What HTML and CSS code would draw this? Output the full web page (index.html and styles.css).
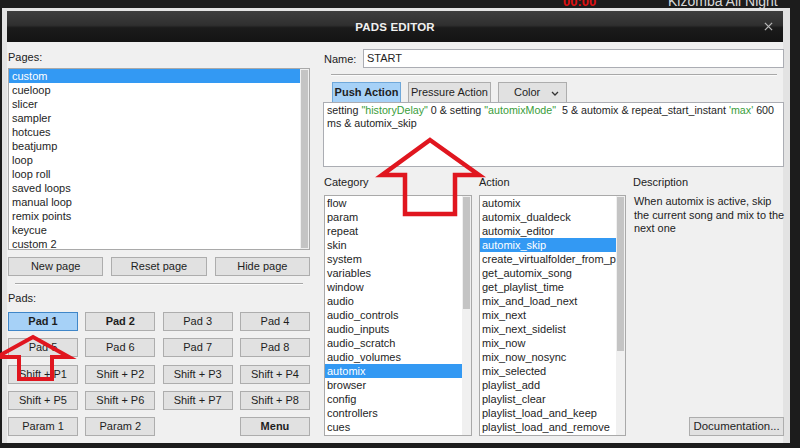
FILE: index.html
```html
<!DOCTYPE html>
<html>
<head>
<meta charset="utf-8">
<title>Pads Editor</title>
<link rel="stylesheet" href="styles.css">
</head>
<body>
<div class="screen">
  <div class="bg-app">
    <span class="bg-red">00:00</span>
    <span class="bg-song">Kizomba All Night /Dem</span>
  </div>
  <div class="window">
    <div class="titlebar">
      <span class="title">PADS EDITOR</span>
      <svg class="close" viewBox="0 0 10 10"><path d="M1 1L9 9M9 1L1 9" stroke="#b8b8b8" stroke-width="1.4"/></svg>
    </div>
    <div class="content">
      <div class="left">
        <div class="label pages-label">Pages:</div>
        <div class="listbox pages">
          <div class="items">
            <div class="item sel">custom</div>
            <div class="item">cueloop</div>
            <div class="item">slicer</div>
            <div class="item">sampler</div>
            <div class="item">hotcues</div>
            <div class="item">beatjump</div>
            <div class="item">loop</div>
            <div class="item">loop roll</div>
            <div class="item">saved loops</div>
            <div class="item">manual loop</div>
            <div class="item">remix points</div>
            <div class="item">keycue</div>
            <div class="item">custom 2</div>
          </div>
          <div class="scrollbar"><div class="thumb thumb-full"></div></div>
        </div>
        <div class="btnrow">
          <div class="btn">New page</div>
          <div class="btn">Reset page</div>
          <div class="btn">Hide page</div>
        </div>
        <div class="sep"></div>
        <div class="label pads-label">Pads:</div>
        <div class="padgrid">
          <div class="btn pad sel bold">Pad 1</div>
          <div class="btn pad bold">Pad 2</div>
          <div class="btn pad">Pad 3</div>
          <div class="btn pad">Pad 4</div>
          <div class="btn pad">Pad 5</div>
          <div class="btn pad">Pad 6</div>
          <div class="btn pad">Pad 7</div>
          <div class="btn pad">Pad 8</div>
          <div class="btn pad">Shift + P1</div>
          <div class="btn pad">Shift + P2</div>
          <div class="btn pad">Shift + P3</div>
          <div class="btn pad">Shift + P4</div>
          <div class="btn pad">Shift + P5</div>
          <div class="btn pad">Shift + P6</div>
          <div class="btn pad">Shift + P7</div>
          <div class="btn pad">Shift + P8</div>
          <div class="btn pad">Param 1</div>
          <div class="btn pad">Param 2</div>
          <div class="pad-empty"></div>
          <div class="btn pad bold">Menu</div>
        </div>
      </div>
      <div class="divider"></div>
      <div class="right">
        <div class="namerow">
          <span class="name-label">Name:</span>
          <div class="input">START</div>
        </div>
        <div class="sep sep-right"></div>
        <div class="tabs">
          <div class="tab tab-push">Push Action</div>
          <div class="tab tab-pressure">Pressure Action</div>
          <div class="tab tab-color">Color <svg class="chev" viewBox="0 0 8 5"><path d="M1 1L4 4L7 1" fill="none" stroke="#333" stroke-width="1.3"/></svg></div>
        </div>
        <div class="textarea">setting <span class="str">"historyDelay"</span> 0 &amp; setting <span class="str">"automixMode"</span>&nbsp; 5 &amp; automix &amp; repeat_start_instant <span class="str">'max'</span> 600<br>ms &amp; automix_skip</div>
        <div class="cols">
          <div class="col">
            <div class="label col-label">Category</div>
            <div class="listbox">
              <div class="items">
                <div class="item">flow</div>
                <div class="item">param</div>
                <div class="item">repeat</div>
                <div class="item">skin</div>
                <div class="item">system</div>
                <div class="item">variables</div>
                <div class="item">window</div>
                <div class="item">audio</div>
                <div class="item">audio_controls</div>
                <div class="item">audio_inputs</div>
                <div class="item">audio_scratch</div>
                <div class="item">audio_volumes</div>
                <div class="item sel">automix</div>
                <div class="item">browser</div>
                <div class="item">config</div>
                <div class="item">controllers</div>
                <div class="item">cues</div>
              </div>
              <div class="scrollbar"><div class="thumb thumb-cat"></div></div>
            </div>
          </div>
          <div class="col">
            <div class="label col-label">Action</div>
            <div class="listbox">
              <div class="items">
                <div class="item">automix</div>
                <div class="item">automix_dualdeck</div>
                <div class="item">automix_editor</div>
                <div class="item sel">automix_skip</div>
                <div class="item">create_virtualfolder_from_p</div>
                <div class="item">get_automix_song</div>
                <div class="item">get_playlist_time</div>
                <div class="item">mix_and_load_next</div>
                <div class="item">mix_next</div>
                <div class="item">mix_next_sidelist</div>
                <div class="item">mix_now</div>
                <div class="item">mix_now_nosync</div>
                <div class="item">mix_selected</div>
                <div class="item">playlist_add</div>
                <div class="item">playlist_clear</div>
                <div class="item">playlist_load_and_keep</div>
                <div class="item">playlist_load_and_remove</div>
              </div>
              <div class="scrollbar"><div class="thumb thumb-act"></div></div>
            </div>
          </div>
          <div class="col desc-col">
            <div class="label col-label">Description</div>
            <div class="desc">When automix is active, skip<br>the current song and mix to the<br>next one</div>
            <div class="btn doc-btn">Documentation...</div>
          </div>
        </div>
      </div>
    </div>
  </div>
  <svg class="annotations" viewBox="0 0 800 448">
    <path d="M430 140 L479 175 L455 175 L455 214 L405 214 L405 175 L382 175 Z" fill="none" stroke="#e0161f" stroke-width="4.5" stroke-linejoin="miter"/>
    <path d="M33 337 L69 357 L52 357 L52 379 L19 379 L19 357 L-3 357 Z" fill="none" stroke="#e0161f" stroke-width="4" stroke-linejoin="miter"/>
  </svg>
</div>
</body>
</html>
```

FILE: styles.css
```css
* { box-sizing: border-box; }
html, body { margin: 0; padding: 0; }
body {
  width: 800px;
  height: 448px;
  overflow: hidden;
  background: #1c1c1c;
  font-family: "Liberation Sans", Arial, sans-serif;
  font-size: 11px;
  color: #1e1e1e;
}
.screen {
  position: relative;
  width: 800px;
  height: 448px;
  padding: 8px 10px 0 2px;
}
.bg-app {
  position: absolute;
  left: 0; top: 0;
  width: 800px;
  height: 8px;
  overflow: hidden;
}
.bg-red {
  position: absolute;
  left: 563px; top: -6px;
  color: #e01010;
  font-weight: bold;
  font-size: 13px;
}
.bg-song {
  position: absolute;
  left: 668px; top: -7px;
  color: #d8d8d8;
  font-size: 14px;
}
.window {
  position: relative;
  width: 788px;
  height: 435px;
  background: #e3e3e3;
  padding: 3px 7px 0 5px;
  display: flex;
  flex-direction: column;
}
.titlebar {
  flex: none;
  height: 31px;
  background: linear-gradient(#3e3e3e, #2f2f2f 46%, #1b1b1b 54%, #141414);
  display: flex;
  align-items: center;
  justify-content: center;
  position: relative;
}
.title {
  color: #f0f0f0;
  font-weight: bold;
  font-size: 11.5px;
  letter-spacing: 0.2px;
}
.close {
  position: absolute;
  right: 10px;
  top: 11px;
  width: 9px;
  height: 9px;
}
.content {
  flex: 1;
  background: #f0f0f0;
  display: flex;
}
.left {
  width: 309px;
  padding: 0 6px 0 1px;
  display: flex;
  flex-direction: column;
}
.label {
  height: 14px;
  line-height: 14px;
  color: #222;
}
.pages-label { margin-top: 8px; }
.listbox {
  border: 1px solid #a9a9a9;
  background: #fff;
  display: flex;
  overflow: hidden;
}
.pages { margin-top: 4px; height: 182px; }
.items { flex: 1; overflow: hidden; }
.item {
  height: 14px;
  line-height: 14px;
  padding-left: 3px;
  white-space: nowrap;
  overflow: hidden;
  color: #1e1e1e;
}
.item.sel { background: #3399f3; color: #fff; }
.scrollbar {
  width: 9px;
  flex: none;
  background: #f0f0f0;
  padding: 1px;
}
.thumb { background: #c4c4c4; width: 7px; }
.thumb-full { height: 100%; }
.thumb-cat { height: 112px; }
.thumb-act { height: 154px; }
.btnrow {
  margin-top: 7px;
  display: grid;
  grid-template-columns: repeat(3, 1fr);
  column-gap: 8px;
}
.btn {
  height: 19px;
  line-height: 17px;
  background: #e1e1e1;
  border: 1px solid #adadad;
  text-align: center;
  white-space: nowrap;
  color: #1e1e1e;
}
.sep {
  margin: 7px 7px 0;
  height: 2px;
  border-top: 1px solid #a8a8a8;
  border-bottom: 1px solid #fbfbfb;
}
.pads-label { margin-top: 6px; }
.padgrid {
  margin-top: 7px;
  display: grid;
  grid-template-columns: repeat(4, 70px);
  column-gap: 7.33px;
  grid-auto-rows: 19px;
  row-gap: 7.25px;
}
.bold { font-weight: bold; }
.pad.sel { background: #a6d1f7; border-color: #3f86c8; }
.divider {
  width: 1px;
  margin: 13px 0 3px;
  background: #c9c9c9;
  box-shadow: 1px 0 0 #fcfcfc;
}
.right {
  flex: 1;
  padding: 7px 0 7px 8px;
  display: flex;
  flex-direction: column;
}
.namerow {
  height: 19px;
  display: flex;
  align-items: center;
}
.name-label { width: 39px; color: #222; }
.input {
  flex: 1;
  height: 19px;
  line-height: 17px;
  border: 1px solid #abadb3;
  background: #fff;
  padding-left: 3px;
}
.sep-right { margin: 6px 7px 0 7px; }
.tabs {
  margin: 6px 0 0 8px;
  display: flex;
  gap: 7px;
}
.tab {
  height: 20px;
  line-height: 18px;
  border: 1px solid #adadad;
  border-bottom: none;
  background: #e1e1e1;
  text-align: center;
  white-space: nowrap;
}
.tab-push { width: 69px; background: #a6d1f7; border-color: #6fa8da; font-weight: bold; }
.tab-pressure { width: 83px; }
.tab-color { width: 69px; text-align: left; padding-left: 15px; position: relative; }
.chev {
  position: absolute;
  right: 7px;
  top: 8px;
  width: 8px;
  height: 5px;
}
.textarea {
  margin-left: -1px;
  height: 65px;
  border: 1px solid #abadb3;
  background: #fff;
  padding: 1px 3px;
  font-size: 10.7px;
  line-height: 12.5px;
  white-space: nowrap;
  overflow: hidden;
}
.str { color: #3a9d3a; }
.cols {
  flex: 1;
  display: grid;
  grid-template-columns: 148px 147px 1fr;
  column-gap: 7px;
}
.col {
  display: flex;
  flex-direction: column;
  min-height: 0;
}
.col-label { margin-top: 8px; }
.col .listbox { flex: 1; margin-top: 6px; min-height: 0; }
.col .item { padding-left: 2px; }
.desc {
  margin-top: 6px;
  line-height: 13.5px;
  font-size: 10.9px;
  white-space: nowrap;
  padding-left: 1px;
  color: #222;
}
.doc-btn {
  margin-top: auto;
  align-self: flex-end;
  width: 95px;
  font-size: 11.4px;
}
.annotations {
  position: absolute;
  left: 0; top: 0;
  width: 800px;
  height: 448px;
  pointer-events: none;
  overflow: visible;
}
```
